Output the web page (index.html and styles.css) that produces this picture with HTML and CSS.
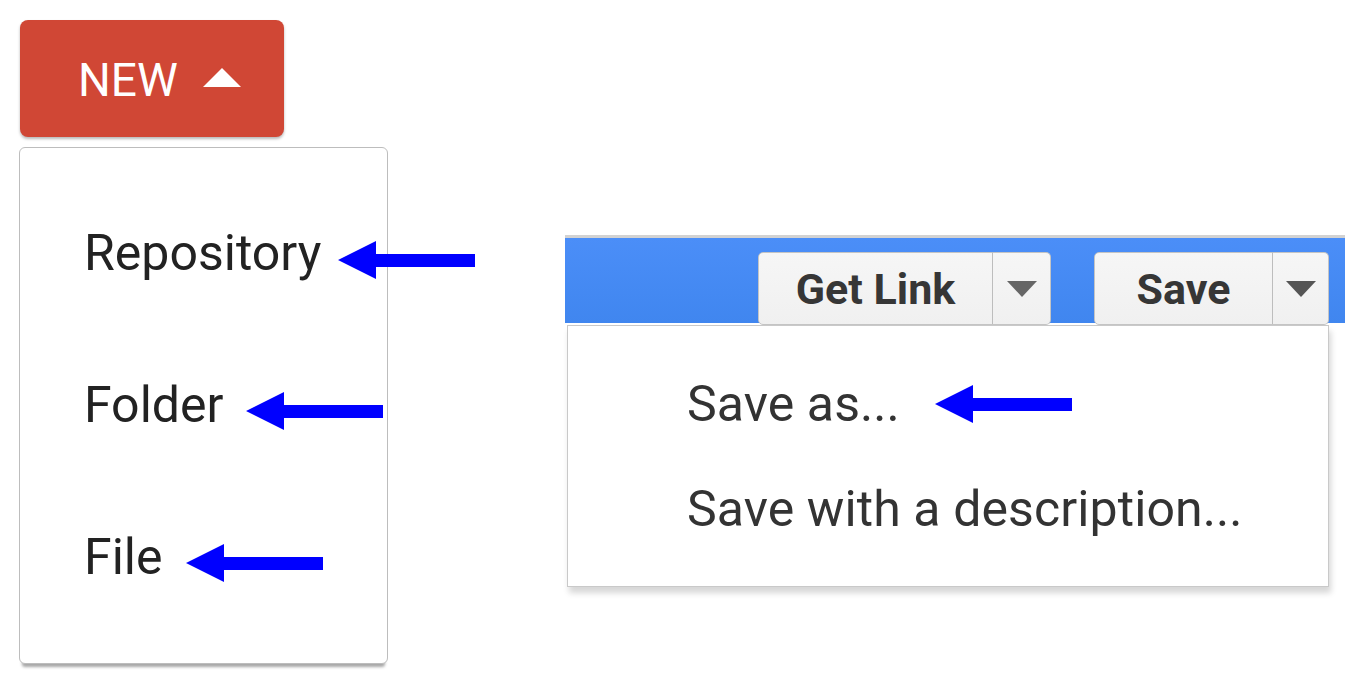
FILE: index.html
```html
<!DOCTYPE html>
<html lang="en">
<head>
<meta charset="utf-8">
<title>Menus</title>
<link rel="stylesheet" href="styles.css">
</head>
<body>
  <div class="left">
    <button class="new-btn">
      <span class="new-label">NEW</span>
      <svg class="new-tri" width="38" height="19" viewBox="0 0 38 19"><polygon points="19,0 38,19 0,19" fill="#fff"/></svg>
    </button>
    <div class="new-menu">
      <div class="new-item">
        <span>Repository</span>
        <svg class="arrow arrow-a" width="137" height="40" viewBox="0 0 137 40"><polygon points="0,20 38,1 38,14 137,14 137,27 38,27 38,39" fill="#0000ff"/></svg>
      </div>
      <div class="new-item">
        <span>Folder</span>
        <svg class="arrow arrow-b" width="137" height="40" viewBox="0 0 137 40"><polygon points="0,20 38,1 38,14 137,14 137,27 38,27 38,39" fill="#0000ff"/></svg>
      </div>
      <div class="new-item">
        <span>File</span>
        <svg class="arrow arrow-c" width="137" height="40" viewBox="0 0 137 40"><polygon points="0,20 38,1 38,14 137,14 137,27 38,27 38,39" fill="#0000ff"/></svg>
      </div>
    </div>
  </div>

  <div class="right">
    <div class="toolbar">
      <div class="split">
        <div class="btn-main btn-link">Get Link</div>
        <div class="btn-caret"><svg width="30" height="16" viewBox="0 0 30 16"><polygon points="0,0 30,0 15,16" fill="#666"/></svg></div>
      </div>
      <div class="split">
        <div class="btn-main btn-save">Save</div>
        <div class="btn-caret btn-caret-save"><svg width="30" height="16" viewBox="0 0 30 16"><polygon points="0,0 30,0 15,16" fill="#555"/></svg></div>
      </div>
    </div>
    <div class="right-body">
      <div class="save-menu">
        <div class="save-item">
          <span>Save as...</span>
          <svg class="arrow arrow-d" width="137" height="40" viewBox="0 0 137 40"><polygon points="0,20 38,1 38,14 137,14 137,27 38,27 38,39" fill="#0000ff"/></svg>
        </div>
        <div class="save-item">
          <span>Save with a description...</span>
        </div>
      </div>
    </div>
  </div>
</body>
</html>
```

FILE: styles.css
```css
* { box-sizing: border-box; }

html, body {
  margin: 0;
  background: #ffffff;
}

body {
  width: 1371px;
  height: 689px;
  overflow: hidden;
  display: flex;
  align-items: flex-start;
  font-family: Roboto, "Liberation Sans", sans-serif;
}

/* ---------- left composite ---------- */
.left {
  width: 405px;
  padding: 20px 0 0 19px;
  display: flex;
  flex-direction: column;
  align-items: flex-start;
}

.new-btn {
  margin-left: 1px;
  width: 264px;
  height: 117px;
  border: none;
  border-radius: 8px;
  background: #d04735;
  box-shadow: 0 2px 3px rgba(0, 0, 0, 0.28);
  display: flex;
  align-items: center;
  padding: 0 0 0 58px;
  font-family: Roboto, "Liberation Sans", sans-serif;
}

.new-label {
  color: #ffffff;
  font-size: 46px;
  line-height: 1;
  margin-top: 3px;
}

.new-tri {
  margin-left: 25px;
  margin-top: -2px;
}

.new-menu {
  margin-top: 10px;
  width: 369px;
  height: 517px;
  border: 1px solid #bdbdbd;
  border-radius: 6px;
  background: #ffffff;
  box-shadow: 0 6px 3px -3px rgba(0, 0, 0, 0.35);
  display: flex;
  flex-direction: column;
  gap: 92px;
  padding: 75px 0 0 64px;
}

.new-item {
  display: flex;
  align-items: center;
  height: 60px;
  font-size: 50px;
  line-height: 60px;
  color: #222222;
  white-space: nowrap;
}

.arrow { flex: none; }
.arrow-a { margin-left: 17px; margin-top: 14px; }
.arrow-b { margin-left: 23px; margin-top: 12px; }
.arrow-c { margin-left: 24px; margin-top: 12px; }

/* ---------- right composite ---------- */
.right {
  margin-left: 160px;
  margin-top: 235px;
  width: 780px;
}

.toolbar {
  height: 88px;
  border-top: 3px solid #d2d2d2;
  background: linear-gradient(#4b8ef8, #4086ef);
  display: flex;
  justify-content: flex-end;
  align-items: flex-start;
  gap: 43px;
  padding: 14px 16px 0 0;
}

.split {
  display: flex;
  height: 73px;
}

.btn-main,
.btn-caret {
  height: 73px;
  background: linear-gradient(#f6f6f6, #f0f0f0);
  border: 1px solid #c4c4c4;
  display: flex;
  align-items: center;
  justify-content: center;
}

.btn-main {
  border-radius: 5px 0 0 5px;
  color: #363636;
  font-weight: 700;
  font-size: 43px;
}

.btn-link { width: 235px; }
.btn-save { width: 179px; }

.btn-caret {
  width: 59px;
  border-left: 1px solid #bdbdbd;
  border-radius: 0 5px 5px 0;
  margin-left: -1px;
}

.btn-caret-save { width: 57px; }

.right-body {
  height: 275px;
  padding: 2px 0 0 2px;
  background: #ffffff;
}

.save-menu {
  width: 762px;
  height: 262px;
  background: #ffffff;
  border: 1px solid #c9c9c9;
  box-shadow: 2px 6px 6px rgba(0, 0, 0, 0.16);
  display: flex;
  flex-direction: column;
  gap: 45px;
  padding: 48px 0 0 119px;
}

.save-item {
  display: flex;
  align-items: center;
  height: 60px;
  font-size: 50px;
  line-height: 60px;
  color: #333333;
  white-space: nowrap;
  letter-spacing: 0.1px;
}

.arrow-d { margin-left: 35px; margin-top: 0; }
```
